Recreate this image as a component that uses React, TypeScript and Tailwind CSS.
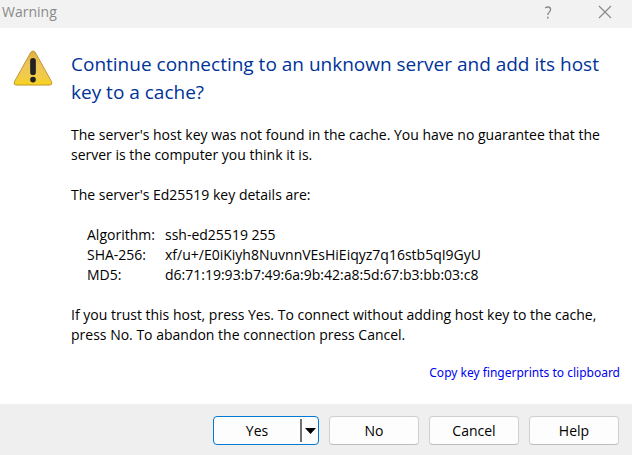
import type { ReactNode } from "react";

const keyDetails = [
  { label: "Algorithm:", value: "ssh-ed25519 255" },
  { label: "SHA-256:", value: "xf/u+/E0iKiyh8NuvnnVEsHiEiqyz7q16stb5qI9GyU" },
  { label: "MD5:", value: "d6:71:19:93:b7:49:6a:9b:42:a8:5d:67:b3:bb:03:c8" },
];

function WarningIcon() {
  return (
    <svg viewBox="0 0 42 38" className="h-9 w-10" aria-hidden="true">
      <defs>
        <linearGradient id="warning-fill" x1="0" y1="0" x2="0" y2="1">
          <stop offset="0" stopColor="#e0ae3a" />
          <stop offset="0.4" stopColor="#edc658" />
          <stop offset="0.75" stopColor="#f0cb4a" />
          <stop offset="1" stopColor="#f8d318" />
        </linearGradient>
      </defs>
      <path
        d="M18.7 2.4Q21 -.4 23.3 2.4L40.6 33.4Q41.8 37 38.8 37H3.2Q.2 37 1.4 33.4Z"
        fill="url(#warning-fill)"
        stroke="#c0912f"
        strokeWidth="1"
      />
      <rect x="18" y="8.5" width="6" height="18" rx="3" fill="#222" />
      <circle cx="21" cy="31.2" r="3" fill="#222" />
    </svg>
  );
}

function DialogButton({ children }: { children: ReactNode }) {
  return (
    <button
      type="button"
      className="h-[29px] w-[90px] rounded border border-[#d0d0d0] border-b-[#bcbcbc] bg-[#fdfdfd] text-center"
    >
      {children}
    </button>
  );
}

export default function App() {
  return (
    <div
      role="dialog"
      aria-labelledby="dialog-heading"
      className="flex min-h-screen flex-col bg-white font-['Open_Sans','Noto_Sans',sans-serif] text-[14px] leading-5 text-black"
    >
      <header className="flex h-7 items-center justify-between bg-[#f2f2f2] pr-5 pb-1 pl-0.5 text-[#8a8a8a]">
        <span>Warning</span>
        <div className="flex items-center gap-[43px]">
          <button type="button" aria-label="Help" className="flex w-3.5 justify-center">
            <svg viewBox="0 0 8 13" className="h-[13px] w-2" fill="none" stroke="currentColor" strokeWidth="1.3">
              <path d="M1.2 2.2Q2.2 1 3.8 1Q6.6 1 6.6 3.6Q6.6 5 5.2 6.2Q3.8 7.3 3.8 9" />
              <path d="M3.8 10.8V12.4" strokeWidth="1.6" />
            </svg>
          </button>
          <button type="button" aria-label="Close">
            <svg viewBox="0 0 14 14" className="size-3.5" fill="none" stroke="currentColor" strokeWidth="1.2">
              <path d="M1 1L13 13M13 1L1 13" />
            </svg>
          </button>
        </div>
      </header>

      <main className="flex flex-1 items-start gap-[18px] pt-[22px] pr-3 pb-[21px] pl-[13px]">
        <div className="w-10 shrink-0">
          <WarningIcon />
        </div>
        <div className="flex min-w-0 flex-1 flex-col gap-5">
          <h1 id="dialog-heading" className="-mb-px text-[19px] leading-7 text-[#003399]">
            Continue connecting to an unknown server and add its host key to a cache?
          </h1>
          <p>
            The server's host key was not found in the cache. You have no guarantee that the server is the
            computer you think it is.
          </p>
          <p>The server's Ed25519 key details are:</p>
          <table className="ml-4 table-fixed text-left">
            <tbody>
              {keyDetails.map(({ label, value }) => (
                <tr key={label}>
                  <th scope="row" className="w-[78px] p-0 font-normal">
                    {label}
                  </th>
                  <td className="p-0">{value}</td>
                </tr>
              ))}
            </tbody>
          </table>
          <p>
            If you trust this host, press Yes. To connect without adding host key to the cache, press No. To
            abandon the connection press Cancel.
          </p>
          <a href="#copy" className="-mt-0.5 self-end font-['Noto_Sans','Open_Sans',sans-serif] text-xs leading-5 text-[#0000f0]">
            Copy key fingerprints to clipboard
          </a>
        </div>
      </main>

      <footer className="flex justify-end gap-2.5 bg-[#efefef] pt-3 pr-[13px] pb-[11px]">
        <div className="flex h-[29px] w-[106px] overflow-hidden rounded border border-[#0078d4] bg-[#fdfdfd]">
          <button type="button" className="flex-1 text-center">
            Yes
          </button>
          <button
            type="button"
            aria-label="More options"
            className="my-0.5 flex w-[18px] items-center justify-center border-l-2 border-[#707070]"
          >
            <svg viewBox="0 0 11 6" className="h-1.5 w-[11px]" aria-hidden="true">
              <path d="M0 0H11L5.5 6Z" />
            </svg>
          </button>
        </div>
        <DialogButton>No</DialogButton>
        <DialogButton>Cancel</DialogButton>
        <DialogButton>Help</DialogButton>
      </footer>
    </div>
  );
}
